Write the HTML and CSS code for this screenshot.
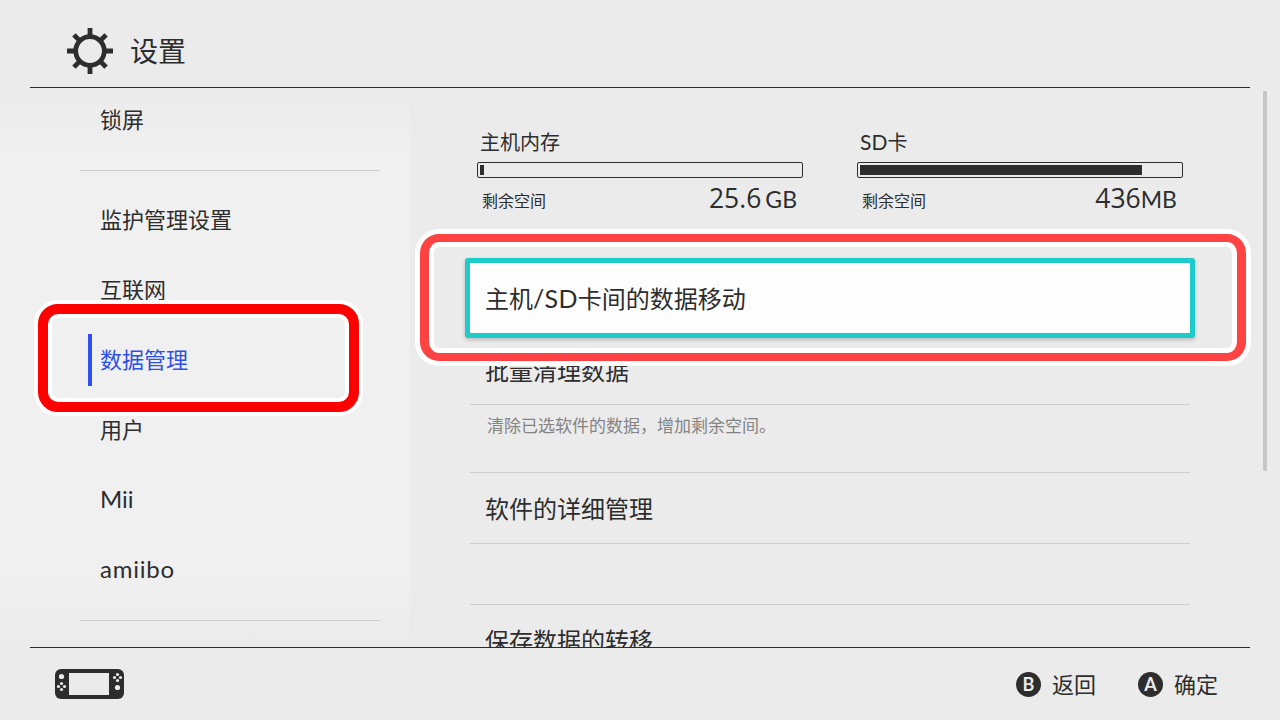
FILE: index.html
```html
<!DOCTYPE html>
<html lang="zh-CN">
<head>
<meta charset="utf-8">
<title>设置</title>
<link rel="stylesheet" href="styles.css">
</head>
<body>
<div class="screen">
  <header class="header">
    <svg class="gear" viewBox="0 0 48 48" width="48" height="48">
      <circle cx="24" cy="24" r="14.3"/>
      <path d="M24 1v8M24 39v8M1 24h8M39 24h8M7.9 7.9l6 6M34.1 34.1l6 6M40.1 7.9l-6 6M13.9 34.1l-6 6"/>
    </svg>
    <h1 class="title">设置</h1>
  </header>

  <main class="main">
    <nav class="sidebar">
      <a class="nav-item">锁屏</a>
      <div class="nav-divider"></div>
      <a class="nav-item">监护管理设置</a>
      <a class="nav-item">互联网</a>
      <a class="nav-item nav-active">数据管理</a>
      <a class="nav-item">用户</a>
      <a class="nav-item nav-mii">Mii</a>
      <a class="nav-item nav-amiibo">amiibo</a>
      <div class="nav-divider"></div>
    </nav>

    <section class="content">
      <div class="storage-row">
        <div class="storage">
          <div class="storage-name">主机内存</div>
          <div class="meter"><div class="meter-fill" style="width:4px"></div></div>
          <div class="storage-info"><span class="free-label">剩余空间</span><span class="amount">25.6<span class="unit unit-gb">GB</span></span></div>
        </div>
        <div class="storage">
          <div class="storage-name"><span class="sd-name">SD</span>卡</div>
          <div class="meter"><div class="meter-fill" style="width:282px"></div></div>
          <div class="storage-info"><span class="free-label">剩余空间</span><span class="amount">436<span class="unit">MB</span></span></div>
        </div>
      </div>
      <div class="option option-selected">主机<span class="sd-option">/SD</span>卡间的数据移动</div>
      <div class="option option-clean">批量清理数据</div>
      <p class="description">清除已选软件的数据，增加剩余空间。</p>
      <div class="option option-software">软件的详细管理</div>
      <div class="spacer"></div>
      <div class="option option-transfer">保存数据的转移</div>
    </section>
    <div class="scrollbar"></div>
  </main>

  <footer class="footer">
    <svg class="console" viewBox="0 0 69 30" width="69" height="30">
      <rect width="69" height="30" rx="6" fill="#2d2d2d"/>
      <rect x="14" y="4" width="40" height="22" fill="#ebebeb"/>
      <g fill="#ebebeb">
        <circle cx="6.5" cy="7.5" r="2.6"/>
        <circle cx="62.5" cy="18.5" r="2.6"/>
        <circle cx="6.5" cy="14.5" r="1.6"/><circle cx="6.5" cy="20.5" r="1.6"/><circle cx="3.5" cy="17.5" r="1.6"/><circle cx="9.5" cy="17.5" r="1.6"/>
        <circle cx="62.5" cy="5.5" r="1.6"/><circle cx="62.5" cy="11.5" r="1.6"/><circle cx="59.5" cy="8.5" r="1.6"/><circle cx="65.5" cy="8.5" r="1.6"/>
      </g>
    </svg>
    <div class="hints">
      <div class="hint"><span class="key">B</span>返回</div>
      <div class="hint"><span class="key">A</span>确定</div>
    </div>
  </footer>

  <div class="callout callout-nav"></div>
  <div class="callout callout-option"></div>
</div>
</body>
</html>
```
FILE: styles.css
```css
* { box-sizing: border-box; }

body {
  margin: 0;
  background: #ebebeb;
  color: #2d2d2d;
  font-family: "Noto Sans CJK SC", sans-serif;
  font-weight: 400;
}

.screen {
  position: relative;
  width: 1280px;
  height: 720px;
  display: flex;
  flex-direction: column;
  overflow: hidden;
}

.header {
  height: 88px;
  margin: 0 30px;
  padding: 14px 0 0 36px;
  border-bottom: 1px solid #2d2d2d;
  display: flex;
  align-items: center;
  gap: 16px;
}
.gear { fill: none; stroke: #2d2d2d; stroke-width: 4.8; }
.title { margin: 0 0 1px; font-size: 28px; line-height: 40px; font-weight: 400; }

.main {
  height: 559px;
  display: flex;
  overflow: hidden;
}

.sidebar {
  width: 410px;
  height: 559px;
  padding-left: 80px;
  background: linear-gradient(#ebebeb, #f0f0f0 70px, #f0f0f0 480px, #ebebeb);
  display: flex;
  flex-direction: column;
  flex-shrink: 0;
}
.nav-item {
  flex-shrink: 0;
  height: 70px;
  padding: 0 0 4px 20px;
  display: flex;
  align-items: center;
  font-size: 22px;
  line-height: 32px;
}
.nav-item:first-child { height: 67px; padding-bottom: 7px; }
.nav-divider { width: 300px; height: 1px; flex-shrink: 0; background: #cdcdcd; margin: 15px 0 14px; }
.nav-active { color: #2f50e6; position: relative; }
.nav-active::before {
  content: "";
  position: absolute;
  left: 8px;
  top: 9px;
  width: 4px;
  height: 52px;
  background: #2f50f0;
}
.nav-mii, .nav-amiibo { font-family: Lato, sans-serif; font-size: 24px; padding-bottom: 2px; }
.nav-amiibo { letter-spacing: .75px; }

.content {
  width: 730px;
  margin-left: 55px;
  flex-shrink: 0;
}
.storage-row { display: flex; gap: 54px; padding: 38px 0 0 12px; height: 170px; }
.storage { width: 326px; }
.storage-name { height: 32px; padding-left: 3px; font-size: 20px; line-height: 32px; }
.sd-name { font-family: Lato, sans-serif; font-size: 21px; }
.sd-option { font-family: Lato, sans-serif; font-size: 25px; letter-spacing: .3px; }
.meter { height: 16px; margin-top: 4px; padding: 2px; border: 1px solid #2d2d2d; border-radius: 2px; }
.meter-fill { height: 10px; background: #2d2d2d; }
.storage-info { display: flex; justify-content: space-between; height: 42px; padding: 0 6px 0 5px; line-height: 42px; }
.free-label { font-size: 16px; line-height: 44px; }
.amount { font-family: "Open Sans", sans-serif; font-size: 26.5px; line-height: 40px; }
.unit { font-family: Lato, sans-serif; font-size: 23px; }
.unit-gb { margin-left: 4px; }

.option {
  margin: 0 5px;
  padding-left: 15px;
  border-bottom: 1px solid #cdcdcd;
  font-size: 24px;
}
.option-selected {
  height: 80px;
  margin: 0;
  background: #fdfdfd;
  border: 5px solid #1ecbcb;
  border-radius: 3px;
  box-shadow: 0 2px 4px rgba(0, 0, 0, .2);
  line-height: 70px;
}
.option-clean { height: 67px; line-height: 64px; }
.description {
  margin: 0 5px;
  height: 68px;
  padding-left: 17px;
  border-bottom: 1px solid #cdcdcd;
  font-size: 17px;
  line-height: 40px;
  color: #848484;
}
.option-software { height: 71px; line-height: 70px; }
.spacer { height: 61px; margin: 0 5px; border-bottom: 1px solid #cdcdcd; }
.option-transfer { height: 72px; line-height: 70px; }

.scrollbar { width: 4px; height: 380px; margin: 3px 0 0 68px; flex-shrink: 0; background: #c6c6c6; border-radius: 1px; }

.footer {
  height: 73px;
  margin: 0 30px;
  padding: 0 32px 0 25px;
  border-top: 1px solid #2d2d2d;
  display: flex;
  align-items: center;
  justify-content: space-between;
}
.hints { display: flex; gap: 42px; margin-bottom: 2px; }
.hint { display: flex; align-items: center; gap: 11px; font-size: 22px; line-height: 32px; }
.key {
  width: 25px;
  height: 25px;
  margin-top: 2px;
  border-radius: 50%;
  background: #2d2d2d;
  color: #ebebeb;
  font: 700 18px/25px Lato, sans-serif;
  text-align: center;
}

.callout { position: absolute; }
.callout-nav {
  left: 38px;
  top: 304px;
  width: 321px;
  height: 108px;
  border: 10px solid #f00;
  border-radius: 20px;
  box-shadow: 0 0 0 4px #fff, inset 0 0 0 4px #fff;
}
.callout-option {
  left: 420px;
  top: 234px;
  width: 826px;
  height: 127px;
  border: solid #ff4343;
  border-width: 8px 9px;
  border-radius: 19px;
  box-shadow: 0 0 0 5px #fff, inset 0 0 0 5px #fff;
}
```
